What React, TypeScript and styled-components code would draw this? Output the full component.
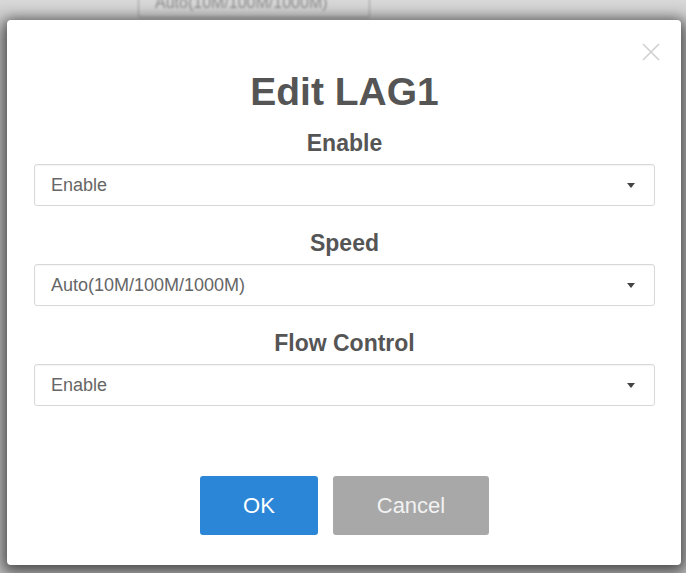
import React from 'react';
import styled, { createGlobalStyle } from 'styled-components';

const GlobalStyle = createGlobalStyle`
  html, body {
    margin: 0;
    padding: 0;
    background: #c9c9c9;
    font-family: "Liberation Sans", Arial, sans-serif;
  }
`;

const Page = styled.div`
  position: relative;
  width: 686px;
  height: 573px;
  overflow: hidden;
  box-sizing: border-box;
  padding: 20px 5px 8px 7px;
  display: flex;
  background: linear-gradient(#d8d8d8, #bdbdbd 40px, #bdbdbd);
`;

// field of the settings form that sits under the dialog
const BackField = styled.div`
  position: absolute;
  left: 138px;
  top: -20px;
  width: 232px;
  height: 38px;
  box-sizing: border-box;
  border: 1px solid #a0a0a0;
  border-radius: 3px;
  padding: 0 16px 5px;
  display: flex;
  align-items: flex-end;
  font-size: 16px;
  line-height: 18px;
  color: #8a8a8a;
  filter: blur(0.8px);
`;

const Modal = styled.div`
  position: relative;
  flex: 1;
  background: #fff;
  border-radius: 4px;
  box-shadow: 0 3px 14px 4px rgba(0, 0, 0, 0.6);
  padding: 50px 26px 30px 27px;
  display: flex;
  flex-direction: column;
`;

const CloseButton = styled.button`
  position: absolute;
  top: 23px;
  right: 21px;
  width: 18px;
  height: 18px;
  padding: 0;
  border: none;
  background: none;
  cursor: pointer;

  svg {
    display: block;
  }
`;

const Title = styled.h2`
  margin: 0;
  text-align: center;
  font-size: 39px;
  line-height: 44px;
  font-weight: bold;
  color: #555;
`;

const Field = styled.div<{ $first?: boolean }>`
  margin-top: ${(p) => (p.$first ? '15px' : '23px')};
  display: flex;
  flex-direction: column;
  gap: 7px;
`;

const Label = styled.label`
  text-align: center;
  font-size: 23px;
  line-height: 28px;
  font-weight: bold;
  color: #555;
`;

const SelectBox = styled.div`
  height: 42px;
  box-sizing: border-box;
  border: 1px solid #d8d8d8;
  border-radius: 3px;
  padding: 0 19px 0 16px;
  display: flex;
  align-items: center;
  justify-content: space-between;
  font-size: 18px;
  color: #666;
  box-shadow: inset 0 1px 1px rgba(0, 0, 0, 0.04);
`;

const Caret = styled.span`
  width: 0;
  height: 0;
  border-left: 4px solid transparent;
  border-right: 4px solid transparent;
  border-top: 5px solid #444;
`;

const Actions = styled.div`
  margin-top: auto;
  display: flex;
  justify-content: center;
  gap: 15px;
`;

const Button = styled.button<{ $variant: 'primary' | 'muted' }>`
  height: 59px;
  width: ${(p) => (p.$variant === 'primary' ? '118px' : '156px')};
  border: none;
  border-radius: 3px;
  font-family: inherit;
  font-size: 22px;
  color: ${(p) => (p.$variant === 'primary' ? '#fff' : '#f2f2f2')};
  background: ${(p) => (p.$variant === 'primary' ? '#2b86d7' : '#a8a8a8')};
  cursor: pointer;
`;

const fields = [
  { label: 'Enable', value: 'Enable' },
  { label: 'Speed', value: 'Auto(10M/100M/1000M)' },
  { label: 'Flow Control', value: 'Enable' },
];

export default function App() {
  return (
    <>
      <GlobalStyle />
      <Page>
        <BackField>Auto(10M/100M/1000M)</BackField>
        <Modal>
          <CloseButton aria-label="Close">
            <svg width="18" height="18" viewBox="0 0 18 18">
              <path d="M1 1L17 17M17 1L1 17" stroke="#cfcfcf" strokeWidth="1.6" />
            </svg>
          </CloseButton>
          <Title>Edit LAG1</Title>
          {fields.map((f, i) => (
            <Field key={f.label} $first={i === 0}>
              <Label>{f.label}</Label>
              <SelectBox>
                <span>{f.value}</span>
                <Caret />
              </SelectBox>
            </Field>
          ))}
          <Actions>
            <Button $variant="primary">OK</Button>
            <Button $variant="muted">Cancel</Button>
          </Actions>
        </Modal>
      </Page>
    </>
  );
}
